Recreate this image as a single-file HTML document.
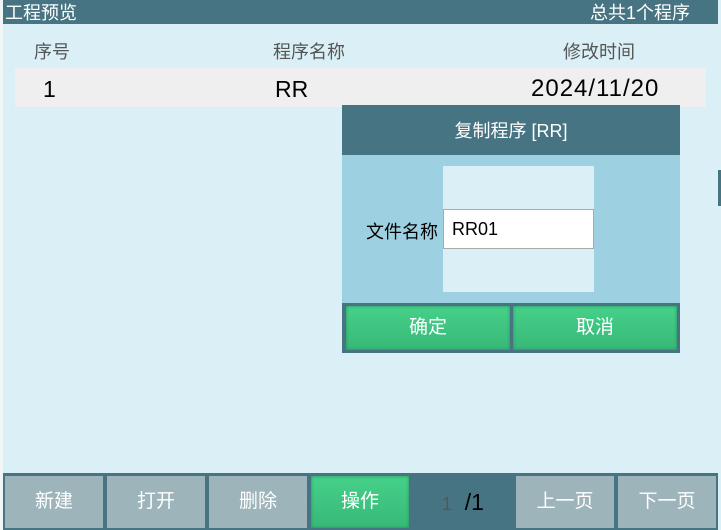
<!DOCTYPE html>
<html><head><meta charset="utf-8"><style>
body{margin:0;width:721px;height:530px;background:#daf0f6;position:relative;overflow:hidden;font-family:"Liberation Sans","Noto Sans CJK SC",sans-serif}
div{position:absolute;box-sizing:border-box}
.hd{left:3px;top:0;width:715px;height:24px;background:#477483;color:#fff;font-size:18px;line-height:26px}
.c{color:#555;font-size:18px;top:38px}
.row{left:15px;top:68px;width:691px;height:39px;background:#efefef;font-size:22px;line-height:42px;color:#000}
.bar{left:3px;top:473px;width:715px;height:57px;background:#477483}
.b{top:476px;height:52px;width:98px;background:#9db4bb;color:#fff;font-size:19px;text-align:center;line-height:52px}
.g{background:linear-gradient(#46d18a,#37b877);box-shadow:inset 0 0 3px #2a8a5a}
</style></head><body>
<div style="left:0;top:0;width:3px;height:530px;background:#f0f6f5"></div>
<div class="hd"><span style="position:absolute;left:2px">工程预览</span><span style="position:absolute;right:28px">总共1个程序</span></div>
<div class="c" style="left:34px">序号</div>
<div class="c" style="left:273px">程序名称</div>
<div class="c" style="left:563px">修改时间</div>
<div class="row"><span style="position:absolute;left:28px;font-size:23px">1</span><span style="position:absolute;left:260px;font-size:23px">RR</span><span style="position:absolute;left:516px;font-size:24px;letter-spacing:1px">2024/11/20</span></div>
<div style="left:342px;top:105px;width:338px;height:50px;background:#477483;color:#fff;font-size:18px;text-align:center;line-height:52px">复制程序 [RR]</div>
<div style="left:342px;top:155px;width:338px;height:148px;background:#9dd0e1"></div>
<div style="left:443px;top:166px;width:151px;height:126px;background:#daf0f6"></div>
<div style="left:366px;top:218px;font-size:18px;color:#000">文件名称</div>
<div style="left:443px;top:209px;width:151px;height:40px;background:#fff;border:1px solid #aaa;font-size:18px;line-height:38px;padding-left:8px;color:#000">RR01</div>
<div style="left:342px;top:303px;width:338px;height:50px;background:#477483"></div>
<div class="g" style="left:346px;top:306px;width:164px;height:44px;color:#fff;font-size:19px;text-align:center;line-height:44px">确定</div>
<div class="g" style="left:513px;top:306px;width:164px;height:44px;color:#fff;font-size:19px;text-align:center;line-height:44px">取消</div>
<div style="left:718px;top:170px;width:3px;height:36px;background:#477483"></div>
<div class="bar"></div>
<div class="b" style="left:5px">新建</div>
<div class="b" style="left:107px">打开</div>
<div class="b" style="left:209px">删除</div>
<div class="b g" style="left:311px">操作</div>
<div style="left:413px;top:476px;width:100px;height:52px;font-size:23px;line-height:52px;text-align:center;color:#000"><span style="color:#555;font-size:18px">1</span>&nbsp;&nbsp;/1</div>
<div class="b" style="left:516px">上一页</div>
<div class="b" style="left:618px">下一页</div>
</body></html>
